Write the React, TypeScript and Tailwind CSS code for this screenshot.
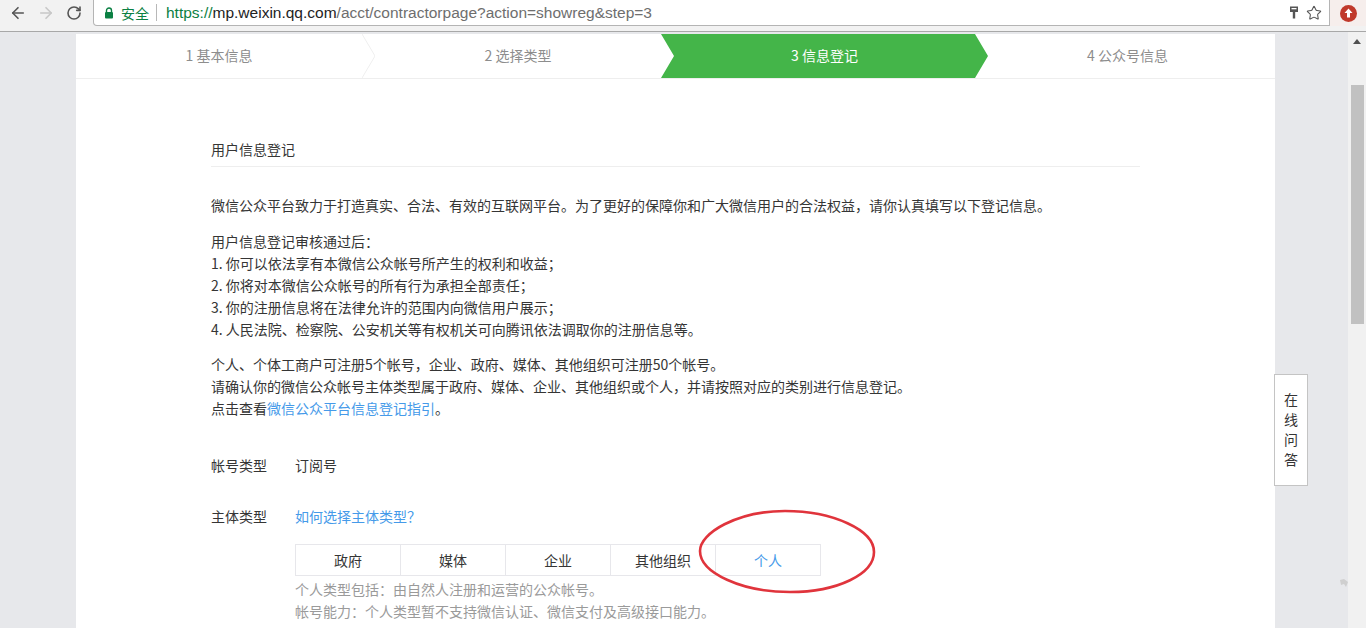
import { ArrowLeft, ArrowRight, RotateCw, Star } from 'lucide-react'

const font = "font-['Microsoft_YaHei','Noto_Sans_CJK_SC','Liberation_Sans',sans-serif]"

const tabs = ['政府', '媒体', '企业', '其他组织', '个人']

function BrowserBar() {
  return (
    <div className="flex h-[32px] flex-none items-start border-b border-[#a8a8a8] bg-[#f2f2f2]">
      <div className="flex h-[26px] w-[93px] flex-none items-center pl-[9px] text-[#555555]">
        <ArrowLeft size={18} strokeWidth={2.2} />
        <ArrowRight size={18} strokeWidth={2.2} className="ml-[10px] text-[#c8c8c8]" />
        <RotateCw size={16} strokeWidth={2.4} className="ml-[11px]" />
      </div>
      <div className="flex h-[26px] w-[1237px] flex-none items-center rounded-bl-sm border-b border-l border-r border-[#b4b4b4] bg-white pl-[10px] pr-[7px]">
        <svg width="10" height="12" viewBox="0 0 10 12" className="flex-none">
          <path d="M2.5 5V3.5a2.5 2.5 0 0 1 5 0V5" fill="none" stroke="#0b8043" strokeWidth="1.4" />
          <rect x="1" y="5" width="8" height="6.5" rx="1" fill="#0b8043" />
        </svg>
        <span className="ml-[7px] text-[14px] leading-none text-[#0b8043]">安全</span>
        <span className="ml-[7px] h-[17px] w-px bg-[#b8b8b8]" />
        <span className="ml-[9px] font-['Liberation_Sans',sans-serif] text-[15.5px] leading-none">
          <span className="text-[#0b8043]">https://</span>
          <span className="text-[#222]">mp.weixin.qq.com</span>
          <span className="text-[#6e6e6e]">/acct/contractorpage?action=showreg&amp;step=3</span>
        </span>
        <div className="ml-auto flex items-center gap-[7px]">
          <svg width="10" height="15" viewBox="0 0 10 15">
            <path d="M1 1.5h8v5.5H6.2v6.5H3.8V7H1z" fill="#555" />
            <rect x="2.5" y="3" width="5" height="1.3" fill="#fff" />
          </svg>
          <Star size={16} strokeWidth={1.6} className="text-[#555]" />
        </div>
      </div>
      <div className="flex h-[26px] flex-1 items-center justify-center bg-[#f6eeec]">
        <div className="flex h-[17px] w-[17px] items-center justify-center rounded-full bg-[#c0392b]">
          <svg width="9" height="10" viewBox="0 0 9 10">
            <path d="M4.5 0.5 8.5 5H6v4.5H3V5H0.5z" fill="#fff" />
          </svg>
        </div>
      </div>
    </div>
  )
}

function StepBar() {
  return (
    <div className="flex h-[45px] border-b border-[#eeeeee] text-[14px] leading-[42px] text-[#8d8d8d]">
      <div className="w-[286px] text-center">1 基本信息</div>
      <svg width="13" height="44" viewBox="0 0 13 44" className="flex-none">
        <path d="M0 0 13 22 0 44" fill="none" stroke="#efefef" />
      </svg>
      <div className="w-[286px] text-center">2 选择类型</div>
      <div className="w-[327px] bg-[#44b549] text-center text-white [clip-path:polygon(0_0,314px_0,100%_50%,314px_100%,0_100%,13px_50%)]">
        3 信息登记
      </div>
      <div className="flex-1 pr-[8px] text-center">4 公众号信息</div>
    </div>
  )
}

function Intro() {
  return (
    <>
      <div className="border-b border-[#eeeeee] pb-[6px] leading-[22px]">用户信息登记</div>
      <p className="mt-[27px] leading-[22px]">
        微信公众平台致力于打造真实、合法、有效的互联网平台。为了更好的保障你和广大微信用户的合法权益，请你认真填写以下登记信息。
      </p>
      <div className="mt-[14px] leading-[22px]">
        <div>用户信息登记审核通过后：</div>
        <div>1. 你可以依法享有本微信公众帐号所产生的权利和收益；</div>
        <div>2. 你将对本微信公众帐号的所有行为承担全部责任；</div>
        <div>3. 你的注册信息将在法律允许的范围内向微信用户展示；</div>
        <div>4. 人民法院、检察院、公安机关等有权机关可向腾讯依法调取你的注册信息等。</div>
      </div>
      <div className="mt-[13px] leading-[22px]">
        <div>个人、个体工商户可注册5个帐号，企业、政府、媒体、其他组织可注册50个帐号。</div>
        <div>请确认你的微信公众帐号主体类型属于政府、媒体、企业、其他组织或个人，并请按照对应的类别进行信息登记。</div>
        <div>
          点击查看<span className="text-[#459ae9]">微信公众平台信息登记指引</span>。
        </div>
      </div>
    </>
  )
}

function TypeForm() {
  return (
    <>
      <div className="mt-[35px] flex leading-[22px]">
        <div className="w-[84px] flex-none">帐号类型</div>
        <div>订阅号</div>
      </div>
      <div className="mt-[29px] flex leading-[22px]">
        <div className="w-[84px] flex-none">主体类型</div>
        <div>
          <div className="text-[#459ae9]">如何选择主体类型？</div>
          <div className="mt-[17px] flex h-[32px] w-[526px] border border-[#e7e7eb] leading-[30px]">
            {tabs.map((t, i) => (
              <div
                key={t}
                className={
                  i === 4
                    ? 'flex-1 text-center text-[#459ae9]'
                    : 'w-[105px] border-r border-[#e7e7eb] text-center'
                }
              >
                {t}
              </div>
            ))}
          </div>
          <div className="mt-[2px] text-[#9a9a9a]">个人类型包括：由自然人注册和运营的公众帐号。</div>
          <div className="text-[#9a9a9a]">帐号能力：个人类型暂不支持微信认证、微信支付及高级接口能力。</div>
        </div>
      </div>
    </>
  )
}

export default function App() {
  return (
    <div className={`relative flex h-[628px] w-[1366px] flex-col overflow-hidden bg-[#e7e8eb] ${font}`}>
      <BrowserBar />
      <div className="flex min-h-0 flex-1">
        <div className="min-w-0 flex-1 pl-[76px] pt-[2px]">
          <div className="h-[700px] w-[1199px] bg-white">
            <StepBar />
            <div className="ml-[135px] w-[929px] pt-[59px] text-[14px] text-[#353535]">
              <Intro />
              <TypeForm />
            </div>
          </div>
        </div>
        <div className="flex w-[18px] flex-none flex-col items-center bg-[#f1f1f1]">
          <svg width="8" height="5" viewBox="0 0 8 5" className="mt-[7px] flex-none">
            <path d="M4 0 8 5H0z" fill="#505050" />
          </svg>
          <div className="mt-[41px] h-[239px] w-[13px] bg-[#c1c1c1]" />
        </div>
      </div>

      {/* 悬浮按钮 */}
      <div className="absolute left-[1274px] top-[374px] flex h-[112px] w-[34px] flex-col items-center justify-center border border-[#c4c4c4] bg-white pb-[2px] text-[14px] leading-[20px] text-[#353535]">
        <span>在</span>
        <span>线</span>
        <span>问</span>
        <span>答</span>
      </div>

      <svg width="10" height="10" viewBox="0 0 10 10" className="absolute left-[1339px] top-[578px]">
        <path d="M1 2 5 1l4 3-2 5-2-3-3 1z" fill="#cfcfcf" />
      </svg>

      {/* 标注的红圈 */}
      <svg width="186" height="90" viewBox="0 0 186 90" className="absolute left-[695px] top-[506px]">
        <path
          d="M5 45C5 27 42 5 90 5c48 0 89 19 89 41 0 22-36 40-84 40C47 86 5 67 5 45Z"
          fill="none"
          stroke="#e0343c"
          strokeWidth="2.6"
        />
      </svg>
    </div>
  )
}
